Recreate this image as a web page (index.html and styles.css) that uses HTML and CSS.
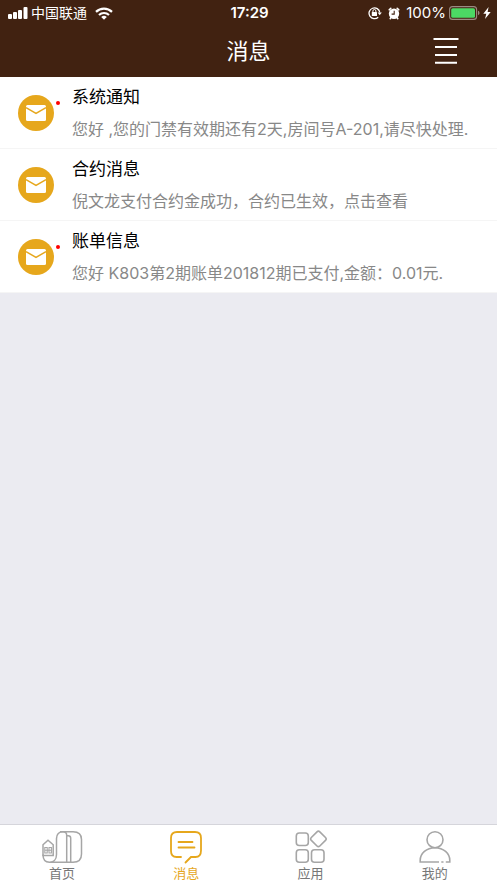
FILE: index.html
```html
<!DOCTYPE html>
<html lang="zh-CN">
<head>
<meta charset="utf-8">
<meta name="viewport" content="width=device-width, initial-scale=1">
<title>消息</title>
<link rel="stylesheet" href="styles.css">
</head>
<body>
<svg class="defs" aria-hidden="true">
  <symbol id="mail" viewBox="0 0 36 36">
    <circle cx="18" cy="18" r="18" fill="#e6a71c"/>
    <rect x="8" y="10" width="20" height="16" rx="1.5" fill="#fff"/>
    <path d="M8 12.6l10 5.8 10-5.8" fill="none" stroke="#e6a71c" stroke-width="1.5"/>
  </symbol>
</svg>
<header class="top">
  <div class="status">
    <div class="status-side">
      <svg class="signal" width="20" height="12" viewBox="0 0 20 12" fill="#fff"><rect x="0" y="7" width="4" height="5" rx="1"/><rect x="5" y="5" width="4" height="7" rx="1"/><rect x="10" y="3" width="4" height="9" rx="1"/><rect x="15.5" y="0" width="4" height="12" rx="1"/></svg>
      <span class="carrier">中国联通</span>
      <svg class="wifi" width="18" height="13" viewBox="0 0 18 13" fill="none" stroke="#fff" stroke-width="2.2"><path d="M1 4.9a11.4 11.4 0 0 1 16 0"/><path d="M4 8a7.2 7.2 0 0 1 10 0"/><path d="M9 12.8L6.2 10a4 4 0 0 1 5.6 0z" fill="#fff" stroke="none"/></svg>
    </div>
    <time class="clock">17:29</time>
    <div class="status-side status-end">
      <svg class="lock" width="14" height="14" viewBox="0 0 14 14" fill="none" stroke="#fff" stroke-width="1.3"><path d="M10.2 11.2A5.4 5.4 0 1 1 11.8 6.5"/><path d="M9.6 6.4h4.2l-2.1 2.8z" fill="#fff" stroke="none"/><rect x="3.8" y="6.1" width="5.2" height="3.9" rx=".5" fill="#fff" stroke="none"/><path d="M4.9 6.3V5a1.5 1.5 0 0 1 3 0v1.3" stroke-width="1"/></svg>
      <svg class="alarm" width="12" height="13" viewBox="0 0 12 13"><circle cx="6" cy="6.8" r="5.2" fill="#fff"/><path d="M1.2 2.8L2.8 1.4M10.8 2.8L9.2 1.4M2.8 10.8l-.6.9M9.200 10.800l.6.9" stroke="#fff" stroke-width="1.6" stroke-linecap="round"/><path d="M6.200 3.800v3.300H3.600" fill="none" stroke="#412211" stroke-width="1.1"/></svg>
      <span class="percent">100%</span>
      <svg class="battery" width="32" height="14" viewBox="0 0 32 14"><rect x=".6" y=".6" width="27" height="12.8" rx="3" fill="none" stroke="#9b8b82" stroke-width="1.1"/><rect x="2.2" y="2.2" width="23.8" height="9.6" rx="1.6" fill="#4cd964"/><path d="M29 4.8c2 .6 2 3.8 0 4.4z" fill="#9b8b82"/></svg>
      <svg class="bolt" width="8" height="12" viewBox="0 0 8 12"><path d="M5.6 0L.3 6.8h3L2 12l5.7-7H4.6z" fill="#fff"/></svg>
    </div>
  </div>
  <div class="bar">
    <h1>消息</h1>
    <button class="menu" type="button" aria-label="菜单"><svg width="26" height="26" viewBox="0 0 26 26" stroke="#fff" stroke-width="2"><path d="M.5 1h25M2 9h22M2 17h22M2 24.8h22"/></svg></button>
  </div>
</header>
<main>
  <ul class="list">
    <li><a class="item" href="#notice"><span class="avatar unread"><svg width="36" height="36"><use href="#mail"/></svg></span><span class="text"><strong>系统通知</strong><span class="desc">您好 ,您的门禁有效期还有2天,房间号A-201,请尽快处理.</span></span></a></li>
    <li><a class="item" href="#contract"><span class="avatar"><svg width="36" height="36"><use href="#mail"/></svg></span><span class="text"><strong>合约消息</strong><span class="desc">倪文龙支付合约金成功，合约已生效，点击查看</span></span></a></li>
    <li><a class="item" href="#bill"><span class="avatar unread"><svg width="36" height="36"><use href="#mail"/></svg></span><span class="text"><strong>账单信息</strong><span class="desc">您好 K803第2期账单201812期已支付,金额：0.01元.</span></span></a></li>
  </ul>
</main>
<nav class="tabs">
  <a href="#home"><svg width="42" height="34" viewBox="0 0 42 34" fill="none" stroke="#a6a6a6" stroke-width="1.5"><path d="M2 14.800L7 10.200l5.200 4.600V25.500H2z"/><path d="M2 24.500c0 5 2.500 7.800 6.500 7.800s7-3 7-7.800V8.500c0-4.500 2.500-6.800 6.500-6.800h10c6 0 8.500 3.300 8.500 7.800v14.500c0 5-2.500 8.300-8.500 8.300H8.500"/><path d="M19 1.800h3c2.500 0 3.700 1.200 3.700 3.500V32M25.700 5.800h1.500c1.700 0 2.500.8 2.500 2.400V32"/><path d="M3.800 17.500h2.400v5.500H3.800zM8 17.500h2.400v5.500H8zM3.800 20.200h6.600" stroke-width="1.100"/></svg><span>首页</span></a>
  <a class="active" href="#messages"><svg width="42" height="34" viewBox="0 0 42 34" fill="none" stroke="#e6a71c" stroke-width="1.800" stroke-linecap="round"><path d="M16 27h-4.500c-3.500 0-5.500-2.500-5.500-6V8c0-4 2-6 6-6h18c4 0 6 2 6 6v12.500c0 4-2 6.500-5.500 6.500h-4.500L20.500 32.500"/><path d="M13.500 12h14M13.500 17.500h16"/></svg><span>消息</span></a>
  <a href="#apps"><svg width="42" height="34" viewBox="0 0 42 34" fill="none" stroke="#a6a6a6" stroke-width="1.600"><rect x="6.300" y="3" width="12" height="12.500" rx="3"/><rect x="6.300" y="19.800" width="12" height="12.500" rx="3"/><rect x="21.500" y="19.800" width="12.500" height="12.500" rx="3"/><rect x="22.400" y="2.900" width="12" height="12" rx="2" transform="rotate(45 28.400 8.900)"/></svg><span>应用</span></a>
  <a href="#me"><svg width="42" height="34" viewBox="0 0 42 34" fill="none" stroke="#a6a6a6" stroke-width="1.600"><circle cx="21" cy="9.700" r="8"/><path d="M25 32H6.200v-1.500c0-7 6.300-12.800 14.800-12.800s14.800 5.800 14.800 12.800V32h-4M27.300 32h2.200"/></svg><span>我的</span></a>
</nav>
</body>
</html>
```
FILE: styles.css
```css
* { box-sizing: border-box; }
body {
  margin: 0;
  min-height: 100vh;
  display: flex;
  flex-direction: column;
  background: #ebebf1;
  color: #000;
  font-family: Inter, "Noto Sans CJK SC", sans-serif;
}
svg { display: block; flex: none; }
a { color: inherit; text-decoration: none; }
.defs { position: absolute; width: 0; height: 0; }

.top { background: #412211; color: #fff; }
.status {
  display: flex;
  align-items: center;
  height: 26px;
  padding: 0 6px 0 8px;
  font-size: 14px;
  line-height: 20px;
}
.status-side { display: flex; flex: 1; align-items: center; gap: 8px; }
.signal { margin-right: -5px; }
.status-end { justify-content: flex-end; gap: 6px; }
.percent { font-size: 15px; margin-right: -3px; }
.bolt { margin-left: -4px; }
.clock { font-size: 15px; font-weight: 600; }
.bar {
  display: grid;
  grid-template-columns: 1fr auto 1fr;
  align-items: center;
  height: 51px;
  padding: 0 38px 2px;
}
h1 {
  grid-column: 2;
  margin: 0;
  font-size: 22px;
  line-height: 32px;
  font-weight: 400;
}
.menu {
  justify-self: end;
  padding: 0;
  border: 0;
  background: none;
}

main { flex: 1; }
.list { margin: 0; padding: 0; list-style: none; background: #fff; }
.list li { border-bottom: 1px solid #f5f5f5; }
.item {
  display: flex;
  align-items: center;
  gap: 18px;
  height: 71px;
  padding: 0 18px;
}
.avatar { position: relative; }
.unread::after {
  content: "";
  position: absolute;
  top: 6px;
  right: -6px;
  width: 4px;
  height: 4px;
  border-radius: 50%;
  background: #f00;
}
.text { display: flex; flex-direction: column; gap: 8px; white-space: nowrap; }
.text strong { font-size: 17px; line-height: 24px; font-weight: 400; }
.desc { font-size: 16px; line-height: 24px; color: #888; }

.tabs {
  display: flex;
  padding: 5px 0 1px;
  border-top: 1px solid #d5d5db;
  background: #fff;
}
.tabs a {
  flex: 1;
  display: flex;
  flex-direction: column;
  align-items: center;
  font-size: 13px;
  line-height: 18px;
  color: #777;
}
.tabs .active { color: #e6a71c; }
```
